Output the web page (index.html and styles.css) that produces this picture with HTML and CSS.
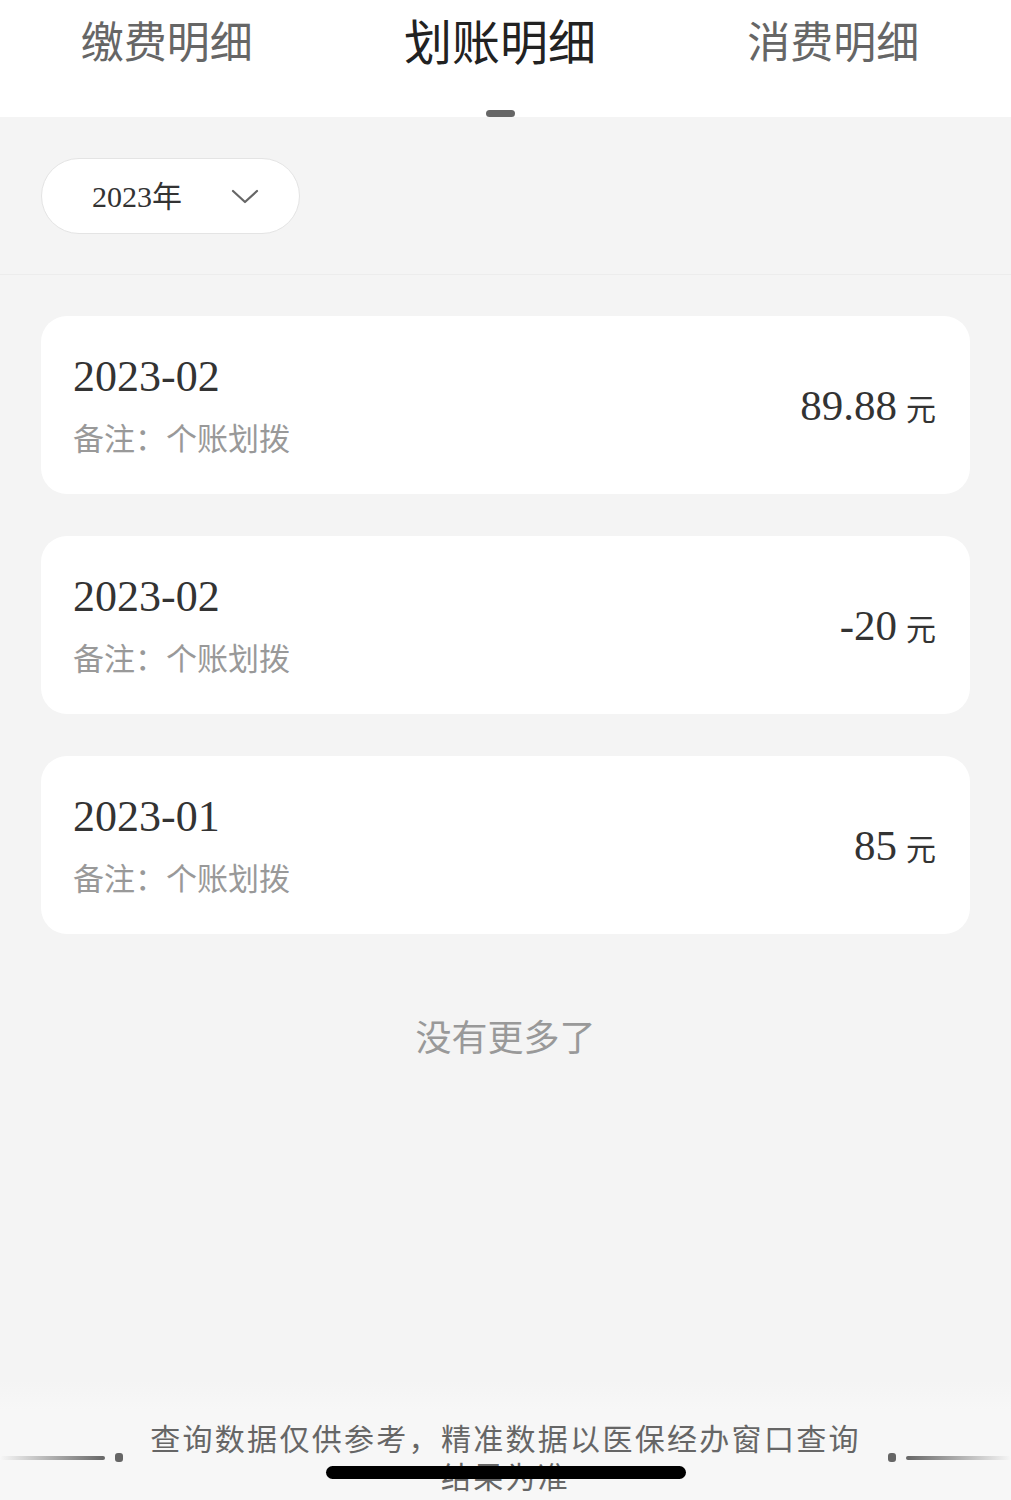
FILE: index.html
```html
<!DOCTYPE html>
<html lang="zh-CN">
<head>
    <meta charset="UTF-8">
    <meta name="viewport" content="width=device-width, initial-scale=1.0">
    <title>划账明细</title>
    <link rel="stylesheet" href="styles.css">
</head>
<body>

    <div class="tabs">
        <div class="tab">缴费明细</div>
        <div class="tab active">划账明细</div>
        <div class="tab">消费明细</div>
    </div>

    <div class="filter">
        <div class="year-picker">
            <span class="year">2023年</span>
            <svg class="chevron" width="28" height="16" viewBox="0 0 28 16">
                <polyline points="2,2 14,13 26,2" fill="none" stroke="#666" stroke-width="2.2" stroke-linecap="round" stroke-linejoin="round"/>
            </svg>
        </div>
    </div>

    <div class="list">
        <div class="card">
            <div class="info">
                <div class="date">2023-02</div>
                <div class="remark">备注：个账划拨</div>
            </div>
            <div class="amount">89.88<span class="unit">元</span></div>
        </div>
        <div class="card">
            <div class="info">
                <div class="date">2023-02</div>
                <div class="remark">备注：个账划拨</div>
            </div>
            <div class="amount">-20<span class="unit">元</span></div>
        </div>
        <div class="card">
            <div class="info">
                <div class="date">2023-01</div>
                <div class="remark">备注：个账划拨</div>
            </div>
            <div class="amount">85<span class="unit">元</span></div>
        </div>
        <p class="no-more">没有更多了</p>
    </div>

    <div class="footer">
        <span class="side left"><i class="bar"></i><i class="dot"></i></span>
        <p class="notice">查询数据仅供参考，精准数据以医保经办窗口查询结果为准</p>
        <span class="side right"><i class="dot"></i><i class="bar"></i></span>
        <div class="home-bar"></div>
    </div>

</body>
</html>
```

FILE: styles.css
```css
body {
    margin: 0;
    padding: 0;
    width: 1011px;
    height: 1500px;
    overflow: hidden;
    background: #f4f4f4;
    font-family: "Noto Sans CJK SC", "Noto Sans", sans-serif;
    position: relative;
}
.tabs {
    display: flex;
    height: 117px;
    padding-right: 11px;
    background: #fff;
}
.tab {
    flex: 1;
    text-align: center;
    font-size: 43px;
    line-height: 78px;
    color: #666;
    position: relative;
}
.tab.active {
    font-size: 48px;
    color: #222;
}
.tab.active::after {
    content: "";
    position: absolute;
    left: 50%;
    top: 110px;
    width: 29px;
    height: 7px;
    margin-left: -14px;
    border-radius: 4px;
    background: #666;
}
.filter {
    height: 158px;
    padding: 0 41px;
    display: flex;
    align-items: center;
    border-bottom: 1px solid #ececec;
    box-sizing: border-box;
}
.year-picker {
    width: 259px;
    height: 76px;
    box-sizing: border-box;
    border: 1px solid #e4e4e4;
    border-radius: 38px;
    background: #fff;
    display: flex;
    align-items: center;
    padding: 0 40px 0 50px;
    justify-content: space-between;
}
.year {
    font-family: "Liberation Serif", "Noto Sans CJK SC", serif;
    font-size: 30px;
    color: #333;
    margin-top: -3px;
}
.chevron {
    margin-top: 2px;
}
.list {
    padding: 41px 41px 0;
}
.card {
    height: 178px;
    background: #fff;
    border-radius: 26px;
    margin-bottom: 42px;
    display: flex;
    align-items: center;
    justify-content: space-between;
    padding: 0 34px 0 32px;
    box-sizing: border-box;
}
.date {
    font-family: "Liberation Serif", serif;
    font-size: 44px;
    color: #333;
    line-height: 56px;
    margin-top: -6px;
}
.remark {
    font-size: 31px;
    color: #999;
    line-height: 44px;
    margin-top: 10px;
    margin-bottom: -4px;
}
.amount {
    font-family: "Liberation Serif", serif;
    font-size: 43px;
    color: #333;
    margin-top: 0;
}
.unit {
    font-family: "Noto Sans CJK SC", serif;
    font-size: 30px;
    margin-left: 9px;
}
.no-more {
    margin: 75px 0 0;
    text-align: center;
    font-size: 36px;
    color: #999;
}
.footer {
    position: absolute;
    left: 0;
    right: 0;
    bottom: 0;
    height: 120px;
    background: linear-gradient(#f4f4f4, #f7f7f7 30px);
    display: flex;
    align-items: flex-start;
}
.notice {
    flex: 1;
    margin: 38px 12px 0;
    font-size: 30px;
    line-height: 38px;
    letter-spacing: 2.3px;
    color: #666;
    text-align: center;
}
.side {
    display: flex;
    align-items: center;
    margin-top: 73px;
    gap: 10px;
}
.bar {
    display: block;
    width: 105px;
    height: 4px;
    border-radius: 2px;
}
.left .bar {
    background: linear-gradient(to right, rgba(102,102,102,0), #666);
}
.right .bar {
    background: linear-gradient(to left, rgba(102,102,102,0), #666);
}
.dot {
    display: block;
    width: 8px;
    height: 9px;
    border-radius: 3px;
    background: #666;
}
.home-bar {
    position: absolute;
    left: 326px;
    top: 86px;
    width: 360px;
    height: 13px;
    border-radius: 7px;
    background: #000;
}
```
